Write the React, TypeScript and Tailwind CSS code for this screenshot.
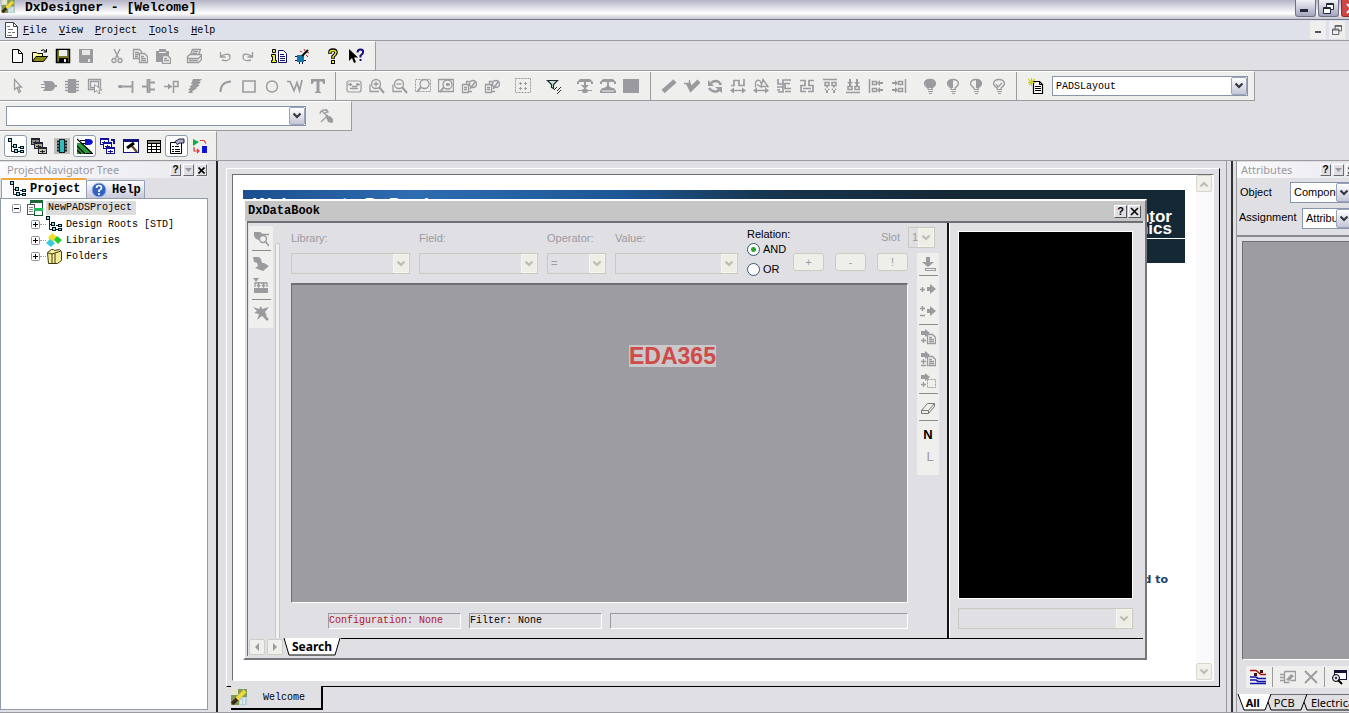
import type { ReactNode } from "react";
import clsx from "clsx";

const G = "#9b9a9f";
const K = "#000";

// line drawing helper, used by most of the flat toolbar glyphs
const line = (d: string, color = G, w = color === G ? 1.3 : 1) => (
  <path d={d} fill="none" stroke={color} strokeWidth={w} />
);
const fill = (d: string, color = G) => <path d={d} fill={color} />;

const bulb = (shade: ReactNode) => (
  <>
    {shade}
    {line("M6 11.5 V10 Q2.500 7.500 2.500 5.500 Q3 1.500 8 1.500 Q13 1.500 13.500 5.500 Q13.500 7.500 10 10 V11.500")}
    {fill("M6 11h5v1H6zM6 13h5v1H6zM7 15h3v1H7z")}
  </>
);

const tree = (
  <>
    {line("M3.5 4V13.5H6M3.5 8.5H7M10 9.500H13M9 13.5H13", "#123")}
    <g fill="#8dd" stroke="#012" strokeWidth="1">
      <rect x=".5" y=".5" width="3" height="3" />
      <rect x="5.500" y="6.500" width="3" height="3" />
      <rect x="6.500" y="11.500" width="3" height="3" />
      <rect x="12.500" y="8.500" width="3" height="2" />
      <rect x="12.500" y="12.500" width="3" height="2" />
    </g>
  </>
);

const sheet = (x: number, y: number, c: string, f = "#fff") => (
  <>
    <rect x={x + 0.5} y={y + 0.5} width="8" height="6" fill={f} stroke={c} />
    <rect x={x} y={y} width="9" height="2" fill={c} />
    <path d={`M${x + 2} ${y + 4.5}h5M${x + 4.5} ${y + 3}v3`} stroke={c} />
  </>
);

const logo = (
  <>
    <rect width="16" height="16" fill="#7f9a5a" />
    <rect x="8" y="8" width="8" height="8" fill="#b7cfd6" />
    <rect width="7" height="6" fill="#e3e6c8" />
    <path d="M1 15 14 2" stroke="#f0d838" strokeWidth="4" />
    <path d="M1 15 6 10" stroke="#3a2c1c" strokeWidth="4" />
    <path d="M10 15v-4M13 15v-6" stroke="#fff" />
  </>
);

const icons: Record<string, ReactNode> = {
  logo,
  tree,
  doc: (
    <>
      <path d="M2.500 .5h8l4 4v11h-12z" fill="#fff" stroke="#444" />
      {line("M10.500 .5v4h4", "#444")}
      {line("M4 4.500h3M5 7.500h5M5 10.500h3M9 10.500h3M4 13.500h5", "#777")}
    </>
  ),
  new: (
    <>
      <path d="M3.500 1.500h6l4 4v9h-10z" fill="#fff" stroke={K} />
      {line("M9.500 1.500v4h4", K)}
    </>
  ),
  open: (
    <>
      <path d="M.5 13.500v-9h4l1 1h5v3" fill="#ffff9c" stroke={K} />
      <path d="M.5 13.500 4 8.500h11.500l-4 5z" fill="#8a8a18" stroke={K} />
      {line("M9 2.500q3-2 5 1M14.500 1v3h-3", K)}
    </>
  ),
  save: (
    <>
      <path d="M1.500 1.500h13v13h-13z" fill="#7b7b22" stroke={K} strokeWidth="1.500" />
      {fill("M4 2h8v6H4z", "#eee")}
      {fill("M4 10h9v5H4z", K)}
      {fill("M9 11h2v3H9z", "#eee")}
    </>
  ),
  saveOff: (
    <>
      {fill("M1 1h14v14H2l-1-1z")}
      {fill("M4 2h8v5H4z", "#e8e8e6")}
      {fill("M10 11h2v3h-2z", "#e8e8e6")}
    </>
  ),
  cut: (
    <>
      {line("M5 1 9.500 10M11 1 6.500 10", G, 1.400)}
      <circle cx="5" cy="12.500" r="2" fill="none" stroke={G} strokeWidth="1.300" />
      <circle cx="11" cy="12.500" r="2" fill="none" stroke={G} strokeWidth="1.300" />
    </>
  ),
  copy: (
    <>
      {line("M1.500 1.500h6l2 2v7h-8zM3 4.500h4M3 6.500h4M3 8.500h3")}
      <path d="M7.500 5.500h5l3 3v6h-8z" fill="#efefed" stroke={G} strokeWidth="1.300" />
      {line("M9 8.500h3M9 10.500h5M9 12.500h5")}
    </>
  ),
  paste: (
    <>
      {fill("M1 3h3V1h7v2h3v11H1z")}
      {fill("M4 4h7v1H4z", "#efefed")}
      <path d="M7.500 7.500h5l3 3v5h-8z" fill="#efefed" stroke={G} strokeWidth="1.300" />
      {line("M9 10.500h3M9 12.500h5")}
    </>
  ),
  print: (
    <>
      {line("M4.500 6.500 6.500 1.500h8l-2 5M7 3.500h5M6 5.500h5")}
      {line("M1.500 8.500 4 6.500h11.500v5l-3 3h-11zM1.500 10.500h11l3-3M3 12.500h9")}
    </>
  ),
  undo: <>{line("M5 12q8 2 8-3t-9-1M3.500 4v5h5")}</>,
  redo: <>{line("M11 12q-8 2-8-3t9-1M12.500 4v5h-5")}</>,
  info: (
    <>
      <path d="M1.500 1.500h3v3h-3zM.5 6.500h4v6h1v2h-5v-2h1v-4h-1z" fill="#ee2" stroke={K} />
      <path d="M7.500 2.500h5l3 3v9h-8z" fill="#fff" stroke="#116" />
      {line("M9 6.500h4M9 8.500h5M9 10.500h5M9 12.500h5", "#116")}
    </>
  ),
  wand: (
    <>
      {fill("M3 7h7v7H3z", "#17a")}
      {line("M1 8.500h2M1 12.500h2M10 12.500h2M5.500 14v2M8.500 14v2", "#115")}
      {line("M8 8 14 2", K, 2)}
      {line("M10 1l1 2M15 5l-2-1M14 9l-2-2M6 3l2 1", "#b22")}
    </>
  ),
  help: (
    <>
      {line("M5 6V4q0-2 3-2t3 2.500q0 1.500-3 4V11", K, 3.500)}
      {line("M5 5.500V4q0-1.500 3-1.500t3 2q0 1.500-3 4v2", "#ee3", 1.400)}
      {fill("M6 12h4v4H6z", K)}
      {fill("M7 13h2v2H7z", "#ee3")}
    </>
  ),
  whats: (
    <>
      {fill("M1 1v12l3-3 2 5 2-1-2-4.500h4z", K)}
      {line("M9.500 4.500q0-3 3-3t2.500 3q0 1.500-2.500 3v2M12.500 11v2", "#117", 2)}
    </>
  ),
  cursor: <>{line("M4.500 1.500v10l2.500-2 2 5 1.500-1-2-4.500h3z")}</>,
  gate: <>{fill("M2 3h7q4 0 5 4h2v2h-2q-1 4-5 4H2l2-3H0V9h4V7H0V6h4z")}</>,
  chip: (
    <>
      {fill("M4 1h8v14H4z")}
      {line("M1 3.500h14M1 6.500h14M1 9.500h14M1 12.500h14", G, 1.500)}
    </>
  ),
  boxsel: (
    <>
      {line("M1.500 1.500h12v10h-12zM3.500 3.500h8v6h-8z")}
      <path d="M7.500 6.500v8l2-2 2 3h1.500l-1-3.500h3z" fill="#efefed" stroke={G} />
    </>
  ),
  pin: <>{line("M0 8.500h14M14.500 3v12", G, 1.800)}{fill("M1 7h3v3H1z")}</>,
  bus: <>{line("M6.500 1v14M8.500 1v14M1 8.500h6M9 4.500h5M9 11.500h5", G, 1.800)}</>,
  port: (
    <>
      {line("M0 8.500h8M9.500 15V3.500h4.500v5h-4.500", G, 1.500)}
      {fill("M4 5.500l4 3-4 3z")}
    </>
  ),
  ripper: <>{fill("M6 1h9l-3 3h2l-3 3h2l-4 3h1l-4 3H5l1 2H1l2-3H1l3-3H2l4-3H4z")}</>,
  arc: <>{line("M2.500 14Q2.500 4 13 3.500", G, 2)}</>,
  rect: <>{line("M2 3h12v11H2z", G, 1.600)}</>,
  circle: <circle cx="8" cy="8.500" r="5.500" fill="none" stroke={G} strokeWidth="1.400" />,
  poly: <>{line("M0 3.500h3l4 9 3-8 2.500 8L15 2", G, 1.700)}</>,
  text: <>{fill("M1 1h14v5h-1.500L12 3.500H9.500v10l1.500.5V15H5v-1l1.500-.5v-10H4L2.500 6H1z")}</>,
  fitpage: (
    <>
      <rect x="1" y="3" width="14" height="11" rx="2" fill="none" stroke={G} strokeWidth="1.200" />
      {line("M2 6.500h4M10 6.500h4M6 8.500h5M4 10.500h8M4.500 5v3M11.500 5v3")}
    </>
  ),
  zoomIn: (
    <>
      {line("M1 6.500V13.500h9")}
      <circle cx="7" cy="6" r="4.500" fill="none" stroke={G} strokeWidth="1.300" />
      {line("M7 3.500v5M4.500 6h5")}
      {line("M10 9l5 6", G, 2)}
    </>
  ),
  zoomOut: (
    <>
      {line("M1 6.500V13.500h9")}
      <circle cx="7" cy="6" r="4.500" fill="none" stroke={G} strokeWidth="1.300" />
      {line("M4.500 6h5")}
      {line("M10 9l5 6", G, 2)}
    </>
  ),
  zoomSel: (
    <>
      <path d="M.5 1.500h15v12H.5z" fill="none" stroke={G} strokeDasharray="2 1" />
      <circle cx="9.500" cy="6" r="4.500" fill="#efefed" stroke={G} strokeWidth="1.300" />
      {line("M6 9l-4 5", G, 2)}
    </>
  ),
  zoomFit: (
    <>
      {line("M.5 1.500h15v12H.5z")}
      <circle cx="9.500" cy="6.500" r="4.500" fill="#efefed" stroke={G} strokeWidth="1.300" />
      {line("M6 9l-4 5M8 6.500h4M9.500 5v3", G, 2)}
    </>
  ),
  push: (
    <>
      {line("M1.500 6.500h6v8h-6zM3 9.500h3M3 11.500h3M8 13.500h3M5.500 6V3.500h3")}
      <circle cx="12" cy="6" r="3.500" fill="none" stroke={G} strokeWidth="1.500" />
      {line("M9 11l5-7", G, 1.500)}
    </>
  ),
  grid: (
    <>
      <path d="M.5 .5h15v14H.5z" fill="none" stroke={G} strokeDasharray="2 1" />
      {line("M4 5.500h3M9 5.500h3M4 10.500h3M9 10.500h3M5.500 4v3M10.500 4v3M5.500 9v3M10.500 9v3", G, 1)}
    </>
  ),
  filter: (
    <>
      <path d="M1.500 2.500h10l-4 4v4l-2-1v-3z" fill="#cfe3df" stroke="#1b2b2b" strokeWidth="1.200" />
      {line("M8 12l3-3M11 13l4-4M11 16l4-4", "#1b2b2b")}
    </>
  ),
  hier1: (
    <>
      {fill("M3 1h10l3 3v2h-2V4H2v2H0V4zM4 7h8l-3 3h-2zM1 12h4l1-1h4l1 1h4v1h-4l-1 2H6l-1-2H1zM7 4h2v7H7z")}
    </>
  ),
  hier2: (
    <>
      {fill("M3 1h10l3 3v2h-2V4H2v2H0V4zM7 4h2v4l3 2h2l2 3v2H0v-2l2-3h2l3-2z")}
      {line("M2 13h12", "#efefed", 1)}
    </>
  ),
  block: <rect x="0" y="1" width="16" height="14" fill={G} />,
  pen: <>{line("M2 13.500 14 3", G, 4.500)}</>,
  penCheck: <>{line("M4 5l3 6L15 3", G, 4.500)}{line("M0 5.500h6M5.500 2v5", G)}</>,
  rotate: (
    <>
      {line("M4 5q2-2 5-2t5 4M12 12q-2 2-5 1.500t-5-3.500", G, 2.500)}
      {fill("M1 2v6h6zM15 15V9H8z")}
    </>
  ),
  route: (
    <>
      {line("M1 7.500h3V2.500h5v5h5V1", G, 1.700)}
      {line("M3 12.500h10", G)}
      {fill("M0 12.500l4-3v6zM16 12.500l-4-3v6z")}
    </>
  ),
  cloud: (
    <>
      {line("M2.500 9.500V4.500q2-4 5-1l1 3M10 1.500l5 7h-7zM3 12.500h10M4 6.500l5 3")}
      {fill("M0 12.500l4-3v6zM16 12.500l-4-3v6z")}
    </>
  ),
  align1: <>{line("M2 1v5h5V2h8M14 5.500H9v5h6M1 9h6v5H2M9 13.500h6M1 12h3M7 2v12", G, 1.700)}</>,
  align2: <>{line("M1 2.500h5v5H2v6h5M15 2.500h-5v5h4v6H9M4 10.500h8", G, 1.700)}</>,
  alTop: (
    <>
      {line("M1 1.500h14M3 4.500h4v3h-4zM10 4.500h4v3h-4z", G, 1.500)}
      {fill("M4 8h2v7H4zM2 12h6l-3-3zM11 8h2v7h-2zM9 12h6l-3-3z")}
    </>
  ),
  alBottom: (
    <>
      {line("M1 14.500h14M3 8.500h4v3h-4zM10 8.500h4v3h-4z", G, 1.500)}
      {fill("M4 1h2v7H4zM2 4h6L5 7zM11 1h2v7h-2zM9 4h6l-3 3z")}
    </>
  ),
  alLeft: (
    <>
      {line("M1.500 1v14M4.500 3.500h4v3h-4zM4.500 10.500h4v3h-4z", G, 1.500)}
      {fill("M9 5l3-3v2h3v2h-3v2zM9 12l3-3v2h3v2h-3v2z")}
    </>
  ),
  alRight: (
    <>
      {line("M14.500 1v14M7.500 3.500h4v3h-4zM7.500 10.500h4v3h-4z", G, 1.500)}
      {fill("M7 5L4 2v2H1v2h3v2zM7 12l-3-3v2H1v2h3v2z")}
    </>
  ),
  bulb1: bulb(fill("M3 5q1-4 5-4t5.500 4q0 2-3.500 5H6Q3 7 3 5")),
  bulb2: bulb(fill("M3 5q1-4 5-4v9H6Q3 7 3 5")),
  bulb3: bulb(fill("M8 1q5 0 5.500 4 0 2-3.500 5H8z")),
  bulb4: bulb(line("M5 6l2 3 4-4")),
  report: (
    <>
      <path d="M5.500 3.500h6l3 3v9h-9z" fill="#fff" stroke={K} strokeWidth="1.200" />
      {line("M11.500 3.500v3h3M7 8.500h6M7 10.500h6M7 12.500h6", K)}
      {line("M0 1l3 3M3.500 0v8M0 4.500h8M7 1L1 7", "#cc2", 1.200)}
    </>
  ),
  rename: (
    <>
      {line("M2 6q0-4 5-4l3 2M8 1l2 3-3 1M4 3l11 11")}
      {fill("M8 9l4-1 3 3-1 4-4-1z")}
      {line("M3 14l7-7")}
    </>
  ),
  sheets: (
    <>
      {sheet(0, 0, "#223", "#888")}
      {sheet(3, 4, "#223", "#aa8")}
      {sheet(7, 9, "#223", "#cc9")}
    </>
  ),
  device: (
    <>
      <rect width="16" height="16" fill="#bdbdbd" />
      <rect x="5.500" y="1.500" width="5" height="13" fill="#3bb" stroke="#122" />
      {line("M3 3.500h2M3 6.500h2M3 9.500h2M3 12.500h2M11 3.500h2M11 6.500h2M11 9.500h2M11 12.500h2", "#122", 2)}
    </>
  ),
  databook: (
    <>
      {fill("M0 5h5l11 11H0z", "#2a9a3a")}
      {line("M0 8l8 8M0 12l4 4M0 1l15 14", K, 1.200)}
      {fill("M8 1h4q3 0 4 3-1 3-4 3H8z", "#11c")}
      {line("M3 2.500h5M5 5.500h3M9 15.500h7", K)}
    </>
  ),
  windows: (
    <>
      {sheet(0, 0, "#119")}
      {sheet(3, 4, "#119")}
      {sheet(6, 9, "#119")}
      {fill("M11 1h4v5h-2V3h-2z", "#119")}
    </>
  ),
  hammer: (
    <>
      <rect x=".5" y="1.500" width="15" height="13" fill="#fff" stroke="#117" />
      {fill("M0 1h16v3H0z", "#117")}
      {line("M8 7l6 7", "#641", 2.200)}
      {line("M4 10l7-5", K, 3)}
    </>
  ),
  table: (
    <>
      <rect x="1.500" y="2.500" width="13" height="12" fill="#fff" stroke={K} />
      {line("M1 4h14M1 8.500h14M1 11.500h14M5.500 6v8M10.500 6v8", K)}
      {line("M1 5.500h14", K)}
    </>
  ),
  props: (
    <>
      <path d="M1.500 4.500h11v11h-11z" fill="#fff" stroke={K} />
      {line("M3 8.500h2M6 8.500h4M3 11.500h2M6 11.500h5M3 13.500h2M6 13.500h5", K)}
      <path d="M6 3.500l4-2.500h5v4h-4l-3 1.500z" fill="#aac" stroke="#223" />
    </>
  ),
  sync: (
    <>
      {fill("M1 1l6 3-6 4z", "#1a4")}
      {fill("M10 8h5v7h-5z", "#11d")}
      {line("M8 2.500h4l2 3M2 9v4h5M5 11l2 2-2 2", "#d33", 1.200)}
    </>
  ),
  project: (
    <>
      <rect x="3.500" y=".5" width="12" height="8" fill="#fff" stroke="#153" />
      {fill("M3 0h13v3H3z", "#1a6b35")}
      <rect x=".5" y="4.500" width="7" height="10" fill="#fff" stroke="#555" />
      {line("M2 7.500h4M2 9.500h4M2 11.500h4", "#888")}
      <rect x="7.500" y="8.500" width="8" height="7" fill="#fff" stroke="#153" />
      {fill("M7 8h9v3H7z", "#2b5")}
    </>
  ),
  libs: (
    <>
      {fill("M6 1l5 4-4 5-5-4z", "#f0e020")}
      {fill("M11 4l5 4-4 4-4-4z", "#2c3")}
      {fill("M4 7l5 4-4 4-5-4z", "#3cd")}
    </>
  ),
  folders: (
    <>
      <path d="M1.500 4.500l4-3h2l1 1 5-1 2 2v9l-4 3h-9z" fill="#f5ef9a" stroke="#443a10" />
      {line("M2 5l4 1v9M6 6l6-2 3-1M9 5v10", "#443a10")}
    </>
  ),
  dbFind: (
    <>
      {fill("M1 1h6l3 2v3H8l-2 3-3-1-2-3z")}
      <circle cx="10" cy="8" r="3.500" fill="#efefed" stroke={G} strokeWidth="1.400" />
      {line("M12 10l4 5M10 3.500h6", G, 1.600)}
    </>
  ),
  dbAdd: <>{fill("M0 1h6l2 2 1 4h2l5 3-6 5-8-3 3-2-1-3-3-1z")}</>,
  dbLoad: (
    <>
      {fill("M1 10h14v5H1zM0 0h6L3 4z")}
      {line("M2 9V5h12v4M5.500 4v5M10.500 4v5M4 7l1.500 2L7 7M9 7l1.500 2L12 7")}
    </>
  ),
  dbOff: (
    <>
      {fill("M0 2l6 2 2-3 1 3 7-2-4 5 2 4-4-1-6 5 2-6-5-1 3-2z")}
      {line("M8 8l7 7", G, 2.500)}
    </>
  ),
  place: <>{fill("M6 1h4v5h4l-6 5-6-5h4zM5 12h11v3H5z")}{line("M6 13.500h9", "#efefed")}</>,
  placeOne: <>{fill("M7 6h3V3l6 5-6 5v-3H7z")}{line("M0 8.500h5M2.500 6v5", G, 1.500)}</>,
  placeMany: <>{fill("M7 6h3V3l6 5-6 5v-3H7z")}{line("M0 5.500h5M2.500 3v5M0 12.500h5", G, 1.500)}</>,
  annot: (
    <>
      {fill("M1 2h4V0l5 4-5 4V6H1z")}
      <path d="M7.500 5.500h5l3 3v6h-8z" fill="#efefed" stroke={G} strokeWidth="1.300" />
      {line("M9 8.500h3M9 10.500h5M9 12.500h5M1 11.500h5M3.500 9v5")}
    </>
  ),
  annotMany: (
    <>
      {fill("M1 2h4V0l5 4-5 4V6H1z")}
      <path d="M7.500 5.500h5l3 3v6h-8z" fill="#efefed" stroke={G} strokeWidth="1.300" />
      {line("M9 8.500h3M9 10.500h5M9 12.500h5M1 10.500h5M3.500 8v5M1 14.500h5")}
    </>
  ),
  annotSel: (
    <>
      {fill("M1 2h4V0l5 4-5 4V6H1z")}
      <path d="M7.500 6.500h8v8h-8z" fill="none" stroke={G} strokeDasharray="2 1" />
      {line("M1 11.500h5M3.500 9v5")}
    </>
  ),
  eraser: (
    <>
      {line("M1.500 11.500l6-7h7v3l-6 7h-7z", "#777")}
      {line("M1.500 11.500h7l6-7M8.500 11.500v3", "#777")}
    </>
  ),
  nets: (
    <>
      {line("M0 1.500h6l5 4h5", "#a11", 1.500)}
      {fill("M4 4h3v3H4zM10 1h3v3h-3z", "#411")}
      {line("M0 8h6l2 1.500h8M0 11h6l2 1.500h8M0 14.500h16", "#11a", 1.600)}
    </>
  ),
  editOff: (
    <>
      {line("M4.500 2.500h11v9h-5M4.500 2.500v11h5M0 5.500h4M0 8.500h4M0 11.500h4")}
      {fill("M6 11l5-6 3 2-5 5z")}
    </>
  ),
  deleteOff: <>{line("M2 2l12 12M14 2L2 14", G, 1.800)}</>,
  inspect: (
    <>
      <rect x="3.500" y="1.500" width="12" height="9" fill="#fff" stroke="#113" />
      {fill("M3 1h13v3H3z", "#113")}
      <circle cx="5" cy="9" r="3.500" fill="#dde" stroke={K} />
      {line("M7 11l4 4", K, 2)}
      <circle cx="5" cy="9" r="1" />
    </>
  ),
  helpBall: (
    <>
      <circle cx="8" cy="8" r="7" fill="#2f62c4" stroke="#9fb6e6" />
      {line("M5.500 6q0-2.500 2.500-2.500T10.500 6q0 1-2.500 2.500V10M8 11v2", "#fff", 1.700)}
    </>
  ),
};

function Icon({ name, className = "w-4 h-4" }: { name: string; className?: string }) {
  return (
    <svg viewBox="0 0 16 16" className={clsx("block shrink-0", className)} aria-hidden="true">
      {icons[name]}
    </svg>
  );
}

function Chevron({ className }: { className?: string }) {
  return (
    <svg viewBox="0 0 10 8" className={clsx("w-[10px] h-2", className)} aria-hidden="true">
      <path d="M1.500 1.500 5 5 8.500 1.500" fill="none" stroke="currentColor" strokeWidth="2.200" />
    </svg>
  );
}

function Tool({ name, pressed }: { name: string; pressed?: boolean }) {
  return (
    <button
      aria-label={name}
      className={clsx(
        "w-[23px] h-[22px] flex items-center justify-center shrink-0",
        pressed && "bg-white border border-[#8e9bab] rounded-[3px]"
      )}
    >
      <Icon name={name} />
    </button>
  );
}

function ToolGroups({ groups }: { groups: string[][] }) {
  return (
    <div className="flex gap-2">
      {groups.map((group, i) => (
        <div key={i} className="flex">
          {group.map((name, j) => (
            <Tool key={j} name={name} />
          ))}
        </div>
      ))}
    </div>
  );
}

interface ComboProps {
  label: string;
  id: string;
  value?: string;
  off?: boolean;
  className?: string;
}

function Combo({ label, id, value = "", off, className }: ComboProps) {
  return (
    <div className={clsx("relative shrink-0", className)}>
      <select
        id={id}
        aria-label={label}
        disabled={off}
        className={clsx(
          "block w-full h-full appearance-none border pl-[3px] pr-4 opacity-100",
          off ? "border-[#cac9bd] bg-[#e0dfe4] text-[#9b9a9f]" : "border-[#8796ad] bg-white text-black"
        )}
      >
        <option>{value}</option>
      </select>
      <span
        className={clsx(
          "absolute top-px right-px bottom-px w-4 flex items-center justify-center border pointer-events-none",
          off
            ? "bg-[#efeee6] border-[#f6f5ef] text-[#bdbcb2]"
            : "bg-linear-to-b from-white to-[#c3c6d6] border-[#9aa3b8] rounded-[2px] text-[#34373f]"
        )}
      >
        <Chevron />
      </span>
    </div>
  );
}

function PanelButtons() {
  const box =
    "w-[11px] h-3 flex items-center justify-center bg-[#e0dfe4] border border-white border-r-[#6b6a6e] border-b-[#6b6a6e] text-[10px] leading-none font-bold";
  return (
    <div className="flex gap-[2px]">
      <button className={box}>?</button>
      <button className={clsx(box, "text-[#9b9a9f]")} aria-label="Pin">
        <svg viewBox="0 0 7 4" className="w-[7px] h-1">
          <path d="M0 0h7L3.500 4z" fill="currentColor" />
        </svg>
      </button>
      <button className={box} aria-label="Close">
        <svg viewBox="0 0 7 7" className="w-[7px] h-[7px]">
          <path d="M.5.5l6 6M6.500.5l-6 6" stroke="#000" strokeWidth="1.600" />
        </svg>
      </button>
    </div>
  );
}

function TitleBar() {
  const win =
    "w-[21px] h-[17px] shrink-0 rounded-b-[3px] border border-t-0 border-[#6f7087] bg-linear-to-b from-[#f1f1f6] to-[#a3a5bd] flex items-center justify-center";
  return (
    <header className="h-5 flex items-start bg-linear-to-b from-[#b5b4c6] via-white via-70% to-[#c5c5d1] border-b border-[#77768f] overflow-hidden">
      <Icon name="logo" className="w-4 h-[13px]" />
      <h1 className="pl-[9px] font-['Liberation_Mono'] font-bold text-[13px] leading-4 flex-1">
        DxDesigner - [Welcome]
      </h1>
      <div className="flex gap-[2px] w-[54px] overflow-hidden">
        <button className={win} aria-label="Minimize">
          <span className="w-2 h-[3px] bg-[#222638] mt-1 -ml-1" />
        </button>
        <button className={win} aria-label="Restore">
          <svg viewBox="0 0 11 11" className="w-[11px] h-[11px]" fill="#fff" stroke="#222638">
            <path d="M3.500 .5h7v6h-7zM3 1.500h8" />
            <path d="M.5 4.500h7v6h-7zM0 5.500h8" />
          </svg>
        </button>
        <button
          className="w-[21px] h-[17px] shrink-0 rounded-b-[3px] border border-t-0 border-[#8f2a2a] bg-[#cf4444] flex items-center pl-1"
          aria-label="Close"
        >
          <svg viewBox="0 0 11 11" className="w-[11px] h-[11px]">
            <path d="M1 1l9 9M10 1L1 10" stroke="#fff" strokeWidth="2" />
          </svg>
        </button>
      </div>
    </header>
  );
}

function MenuBar() {
  return (
    <nav className="h-[21px] flex items-center bg-[#dfe1ea] border-b border-[#9b9a9f]">
      <Icon name="doc" className="w-4 h-4 ml-[3px]" />
      <div className="flex gap-3 pl-1 flex-1 font-['Liberation_Mono'] text-[10px]">
        {["File", "View", "Project", "Tools", "Help"].map((item) => (
          <button key={item}>
            <span className="underline">{item[0]}</span>
            {item.slice(1)}
          </button>
        ))}
      </div>
      <div className="flex gap-[3px] pr-1 text-[#55565e]">
        <button className="w-4 h-[18px] bg-[#efefed] flex items-center justify-center" aria-label="Minimize document">
          <span className="w-[6px] h-[2px] bg-current mt-1" />
        </button>
        <button className="w-4 h-[18px] bg-[#efefed] flex items-center justify-center" aria-label="Restore document">
          <svg viewBox="0 0 11 11" className="w-[10px] h-[10px]" fill="#efefed" stroke="currentColor">
            <path d="M3.500 .5h7v6h-7zM3 1.500h8" />
            <path d="M.5 4.500h7v6h-7zM0 5.500h8" />
          </svg>
        </button>
      </div>
    </nav>
  );
}

const bar = "flex items-center w-max bg-[#efefed] border-t border-t-white border-r border-r-[#9b9a9f]";
const rule = "border-b border-[#9b9a9f]";

function Toolbars() {
  return (
    <div className="text-[10px]">
      <div className={rule}>
        <div className={clsx(bar, "h-[29px] pl-[5px] pr-2 pb-px")}>
          <ToolGroups
            groups={[
              ["new", "open", "save", "saveOff"],
              ["cut", "copy", "paste"],
              ["print"],
              ["undo", "redo"],
              ["info", "wand"],
              ["help", "whats"],
            ]}
          />
        </div>
      </div>
      <div className={clsx(bar, rule, "h-[30px]")}>
        <div className="pl-[6px] pr-[6px] h-full flex items-center border-r border-[#9b9a9f]">
          <ToolGroups
            groups={[
              ["cursor"],
              ["gate", "chip", "boxsel"],
              ["pin", "bus", "port", "ripper"],
              ["arc", "rect", "circle", "poly", "text"],
            ]}
          />
        </div>
        <div className="pl-[6px] pr-2 h-full flex items-center border-r border-[#9b9a9f]">
          <ToolGroups
            groups={[
              ["fitpage", "zoomIn", "zoomOut", "zoomSel", "zoomFit", "push", "push"],
              ["grid"],
              ["filter"],
              ["hier1", "hier2", "block"],
            ]}
          />
        </div>
        <div className="pl-[6px] pr-[6px] h-full flex items-center border-r border-[#9b9a9f]">
          <ToolGroups
            groups={[
              ["pen", "penCheck", "rotate", "route", "cloud", "align1", "align2", "alTop", "alBottom", "alLeft", "alRight"],
              ["bulb1", "bulb2", "bulb3", "bulb4"],
            ]}
          />
        </div>
        <div className="pl-[7px] pr-[6px] h-full flex items-center gap-[5px]">
          <Tool name="report" />
          <Combo
            label="Flow"
            id="flow"
            value="PADSLayout"
            className="w-[196px] h-5 font-['Liberation_Mono']"
          />
        </div>
      </div>
      <div className={clsx(bar, rule, "h-[30px] pl-[6px] pr-[14px] gap-2")}>
        <Combo label="Command" id="command" className="w-[300px] h-5" />
        <Tool name="rename" />
      </div>
      <div className={clsx(bar, "h-[29px] pl-1 pr-[5px]")}>
        <Tool name="tree" pressed />
        <Tool name="sheets" />
        <Tool name="device" />
        <Tool name="databook" pressed />
        <Tool name="windows" />
        <Tool name="hammer" />
        <Tool name="table" />
        <Tool name="props" pressed />
        <Tool name="sync" />
      </div>
    </div>
  );
}

function TreeBox({ open }: { open?: boolean }) {
  return (
    <svg viewBox="0 0 9 9" className="w-[9px] h-[9px] shrink-0">
      <rect x=".5" y=".5" width="8" height="8" rx="1" fill="#fff" stroke="#8b93a3" />
      <path d={open ? "M2 4.500h5" : "M2 4.500h5M4.500 2v5"} stroke="#000" />
    </svg>
  );
}

function Navigator() {
  const items = [
    { icon: "tree", label: "Design Roots [STD]" },
    { icon: "libs", label: "Libraries" },
    { icon: "folders", label: "Folders" },
  ];
  return (
    <aside className="w-[208px] shrink-0 flex flex-col pb-[2px]">
      <div className="h-4 flex items-center justify-between pl-[7px] pr-[1px] mt-px bg-linear-to-r from-[#fbfbfd] to-[#e8e8ee]">
        <span className="font-['Noto_Sans'] text-[11px] leading-4 text-[#9b9a9f]">ProjectNavigator Tree</span>
        <PanelButtons />
      </div>
      <div className="h-5 flex items-end pl-px font-['Liberation_Mono'] font-bold text-[12px] leading-4">
        <button className="h-5 w-[86px] flex items-center gap-1 pl-2 bg-[#fbfbfc] border border-b-0 border-[#91a0b8] border-t-2 border-t-[#f0a83a] rounded-t-[2px]">
          <Icon name="tree" />
          Project
        </button>
        <button className="h-[18px] w-[58px] flex items-center gap-[5px] pl-1 bg-linear-to-b from-[#fdfdfe] to-[#c9cadb] border border-b-0 border-l-0 border-[#91a0b8] rounded-t-[2px]">
          <Icon name="helpBall" />
          Help
        </button>
      </div>
      <div className="flex-1 bg-white border border-[#919bab] pt-px font-['Liberation_Mono'] text-[10px]">
        <div className="flex items-center h-4 pl-[11px] gap-[6px]">
          <TreeBox open />
          <div className="flex items-center gap-[3px]">
            <Icon name="project" />
            <span className="bg-[#dcdcdc] px-[2px] pr-1 leading-[14px]">NewPADSProject</span>
          </div>
        </div>
        {items.map((item) => (
          <div key={item.label} className="flex items-center h-4 pl-[30px]">
            <TreeBox />
            <span className="w-[6px] border-t border-dotted border-[#9b9a9f]" />
            <Icon name={item.icon} />
            <span className="pl-1">{item.label}</span>
          </div>
        ))}
      </div>
    </aside>
  );
}

function SearchForm() {
  const fields = [
    { id: "library", label: "Library:", w: "w-[119px]" },
    { id: "field", label: "Field:", w: "w-[119px]" },
    { id: "operator", label: "Operator:", w: "w-[59px]", value: "=" },
    { id: "value", label: "Value:", w: "w-[123px]" },
  ];
  return (
    <div className="h-[60px] flex justify-between text-[#9b9a9f]">
      <div className="flex gap-[9px]">
        {fields.map((f) => (
          <div key={f.id} className="flex flex-col pt-2 gap-2">
            <label htmlFor={f.id} className="leading-[14px]">
              {f.label}
            </label>
            <Combo label={f.label} id={f.id} value={f.value} off className={clsx(f.w, "h-[21px]")} />
          </div>
        ))}
        <fieldset className="text-black pt-1">
          <legend className="contents">
            <span className="block leading-[14px]">Relation:</span>
          </legend>
          {["AND", "OR"].map((rel) => (
            <label key={rel} className="flex items-center gap-[3px] h-4 mb-1">
              <input
                type="radio"
                name="relation"
                defaultChecked={rel === "AND"}
                className="appearance-none w-[13px] h-[13px] rounded-full border border-[#33566f] bg-white checked:bg-[radial-gradient(circle,#2ba52b_0_2px,#fff_3px)]"
              />
              {rel}
            </label>
          ))}
        </fieldset>
      </div>
      <div className="flex flex-col items-end pt-[7px] gap-2">
        <label htmlFor="slot" className="leading-[14px] pr-2">
          Slot
        </label>
        <div className="flex gap-[11px]">
          {["+", "-", "!"].map((c) => (
            <button
              key={c}
              className="w-[31px] h-[18px] mt-px rounded-[3px] border border-[#cccbc2] bg-[#efefea] text-[11px] leading-none"
            >
              {c}
            </button>
          ))}
        </div>
      </div>
    </div>
  );
}

function Rule() {
  return <div className="w-[19px] h-px bg-[#8b8a8e]" />;
}

function DataBookDialog() {
  const titleBtn =
    "w-[13px] h-[13px] flex items-center justify-center bg-[#e0dfe4] border border-white border-r-[#55555a] border-b-[#55555a] font-bold text-[11px] leading-none";
  const cell = "h-[16px] border border-[#9b9a9f] border-r-white border-b-white leading-[14px]";
  return (
    <section className="absolute left-[10px] top-6 right-[66px] bottom-5 flex flex-col bg-[#e0dfe4] border-2 border-white border-r-[#77767a] border-b-[#77767a] text-[11px]">
      <div className="h-5 shrink-0 flex items-center justify-between pl-[3px] pr-1 bg-[#c6c6c6]">
        <h2 className="font-['Liberation_Mono'] font-bold text-[12px] leading-4">DxDataBook</h2>
        <div className="flex gap-px">
          <button className={titleBtn}>?</button>
          <button className={titleBtn} aria-label="Close DxDataBook">
            <svg viewBox="0 0 9 9" className="w-[9px] h-[9px]">
              <path d="M1 1l7 7M8 1L1 8" stroke="#000" strokeWidth="1.600" />
            </svg>
          </button>
        </div>
      </div>
      <div className="flex-1 min-h-0 flex flex-col mx-[2px] mb-[2px] border-t-2 border-l border-[#6f6e72]">
        <div className="flex-1 min-h-0 flex">
          <div className="w-6 self-start mt-[3px] ml-px py-[2px] flex flex-col items-center bg-[#efefed]">
            <Tool name="dbFind" />
            <Rule />
            <div className="flex flex-col py-[2px]">
              <Tool name="dbAdd" />
              <Tool name="dbLoad" />
            </div>
            <Rule />
            <div className="py-[2px]">
              <Tool name="dbOff" />
            </div>
          </div>
          <div className="w-[5px] mt-5 ml-[2px] rounded-t-[2px] border border-[#c9c8c0] border-b-0 bg-[#f1f1ee]" />
          <div className="flex-1 min-w-0 flex flex-col ml-[11px]">
            <SearchForm />
            <div className="relative flex-1 bg-[#9d9ca0] border border-[#6f6e72] border-t-2 border-r-white border-b-white">
              <span className="absolute left-[337px] top-[60px] bg-[#c9c8cb] text-[#cf4a48] font-bold text-[23px] leading-[22px]">
                EDA365
              </span>
            </div>
            <div className="flex gap-2 pl-[37px] pt-[10px] pb-[9px] font-['Liberation_Mono'] text-[10px]">
              <div className={clsx(cell, "w-[133px] text-[#b0161e]")}>Configuration: None</div>
              <div className={clsx(cell, "w-[133px]")}>Filter: None</div>
              <div className={clsx(cell, "flex-1")} />
            </div>
          </div>
          <div className="w-[39px] shrink-0 flex flex-col pt-1">
            <Combo label="Slot" id="slot" value="1" off className="w-[27px] h-[21px]" />
            <div className="w-[22px] ml-[9px] mt-[5px] pb-1 flex flex-col items-center bg-[#efefed]">
              <Tool name="place" />
              <Rule />
              <div className="flex flex-col py-[2px]">
                <Tool name="placeOne" />
                <Tool name="placeMany" />
              </div>
              <Rule />
              <div className="flex flex-col py-px">
                <Tool name="annot" />
                <Tool name="annotMany" />
                <Tool name="annotSel" />
              </div>
              <Rule />
              <div className="py-[2px]">
                <Tool name="eraser" />
              </div>
              <Rule />
              <button className="h-7 w-full font-bold text-[13px]">N</button>
              <button className="h-4 w-full text-[13px] leading-4 pl-1 text-[#9b9a9f]">L</button>
              <div className="h-[6px]" />
            </div>
          </div>
          <div className="w-[2px] bg-[#111]" />
          <div className="w-[194px] shrink-0 flex flex-col gap-[9px] pt-2 pl-2 pr-[10px] pb-[9px] border-l border-white">
            <div className="flex-1 bg-black border border-white" />
            <Combo label="Symbol" id="symbol" off className="h-[21px]" />
          </div>
        </div>
        <div className="h-[18px] shrink-0 flex">
          <div className="flex items-center gap-[2px] pl-px text-[#9b9a9f]">
            {["M7 1 3 5l4 4z", "M3 1l4 4-4 4z"].map((d) => (
              <button
                key={d}
                aria-label="Scroll tabs"
                className="w-4 h-4 flex items-center justify-center rounded-[2px] border border-[#cfcec6] bg-[#efefec]"
              >
                <svg viewBox="0 0 10 10" className="w-[10px] h-[10px]">
                  <path d={d} fill="currentColor" />
                </svg>
              </button>
            ))}
          </div>
          <button className="relative w-[58px] h-[18px] font-['Noto_Sans'] font-bold text-[12px] leading-4">
            <svg viewBox="0 0 58 18" className="absolute inset-0 w-full h-full">
              <path d="M1 0h56l-5 17H6z" fill="#fff" />
              <path d="M1 0l5 17h46l5-17" fill="none" stroke="#000" />
            </svg>
            <span className="relative">Search</span>
          </button>
          <div className="flex-1 border-t border-black" />
        </div>
      </div>
    </section>
  );
}

function ScrollArrow({ up }: { up?: boolean }) {
  return (
    <button
      aria-label={up ? "Scroll up" : "Scroll down"}
      className="w-4 h-[17px] flex items-center justify-center rounded-[2px] border border-[#d8d7cc] bg-[#f1f0ea] text-[#bdbcb2]"
    >
      <Chevron className={up ? "rotate-180" : ""} />
    </button>
  );
}

function Workspace() {
  return (
    <main className="flex-1 min-w-0 flex flex-col pl-2 pt-[7px] pr-[6px] border-r border-[#9b9a9f]">
      <div className="flex-1 min-h-0 flex flex-col p-[5px] border border-white border-r-black border-b-black">
        <div className="relative flex-1 flex bg-white border border-[#6f6e72] border-r-white border-b-white">
          <div className="flex-1 min-w-0 flex flex-col pt-[15px] pl-[10px] pr-[11px]">
            <div className="h-[73px] shrink-0 flex flex-col bg-[linear-gradient(90deg,#1b4f8f,#2f6cb0_18%,#1d5796_40%,#173650_55%,#142836_75%)] text-white font-bold">
              <div className="flex justify-between h-12">
                <span className="pl-[10px] pt-1 text-[19px] leading-[22px]">Welcome to DxDesigner</span>
                <span className="pr-[13px] pt-[21px] flex flex-col items-end text-[17px] leading-3">
                  <span>Mentor</span>
                  <span>Graphics</span>
                </span>
              </div>
              <div className="h-px bg-white" />
            </div>
            <p className="mt-auto mb-[92px] pr-[17px] text-right font-['DejaVu_Sans'] font-bold text-[11px] leading-4 text-[#1a3e6e]">
              d to
            </p>
          </div>
          <div className="w-[17px] shrink-0 flex flex-col justify-between bg-[#fafafc]">
            <ScrollArrow up />
            <ScrollArrow />
          </div>
          <DataBookDialog />
        </div>
      </div>
      <div className="h-[25px] shrink-0">
        <button className="relative -mt-px ml-[5px] w-[92px] h-6 flex items-center bg-[#e0dfe4] border-r-2 border-b-2 border-black font-['Liberation_Mono'] text-[10px]">
          <Icon name="logo" />
          <span className="pl-4">Welcome</span>
        </button>
      </div>
    </main>
  );
}

function Attributes() {
  return (
    <aside className="w-[118px] shrink-0 overflow-hidden border-l-2 border-[#333] pl-[3px] text-[11px]">
      <div className="w-[121px] h-full flex flex-col border-l border-[#9b9a9f]">
        <div className="h-4 mt-px flex items-center justify-between pl-1 bg-linear-to-r from-[#fbfbfd] to-[#e8e8ee]">
          <span className="font-['Noto_Sans'] text-[11px] leading-4 text-[#9b9a9f]">Attributes</span>
          <PanelButtons />
        </div>
        <div className="flex justify-between pl-[3px] pr-1 pt-1">
          <label htmlFor="object" className="leading-5">
            Object
          </label>
          <Combo label="Object" id="object" value="Component" className="w-[63px] h-[21px]" />
        </div>
        <div className="flex justify-between pl-[2px] pr-1 pt-[5px] pb-[6px]">
          <label htmlFor="assignment" className="leading-[18px]">
            Assignment
          </label>
          <Combo label="Assignment" id="assignment" value="Attributes" className="w-[51px] h-[21px]" />
        </div>
        <div className="flex-1 flex border-t-2 border-[#8b8a8e] pt-1 pl-[5px]">
          <div className="flex-1 bg-[#9d9ca0] border-l border-t border-[#6f6e72] border-b border-b-white" />
        </div>
        <div className="h-[34px] pl-[9px] py-[6px]">
          <div className="flex items-center bg-[#efefed]">
            <Tool name="nets" />
            <span className="w-px h-5 bg-[#9b9a9f] mx-[3px]" />
            <Tool name="editOff" />
            <Tool name="deleteOff" />
            <span className="w-px h-5 bg-[#9b9a9f] mx-[2px]" />
            <Tool name="inspect" />
          </div>
        </div>
        <div className="relative h-[17px] mb-px flex font-['Noto_Sans'] text-[11px] leading-4">
          <svg viewBox="0 0 122 17" className="absolute inset-0 w-[122px] h-[17px]">
            <path d="M1 0l6 16h21l5-16z" fill="#fff" />
            <path d="M1 0l6 16h21l6-16H122M31 8l3 8h30l6-16M67 8l3 8h52" fill="none" stroke="#000" />
          </svg>
          <button className="relative w-[33px] font-bold">All</button>
          <button className="relative w-[33px]">PCB</button>
          <button className="relative pl-[11px]">Electrical</button>
        </div>
      </div>
    </aside>
  );
}

export default function App() {
  return (
    <div className="h-screen w-full overflow-hidden flex flex-col bg-[#e0dfe4] text-black font-['Liberation_Sans',sans-serif]">
      <TitleBar />
      <MenuBar />
      <Toolbars />
      <div className="flex-1 min-h-0 flex border-t border-b border-[#9b9a9f]">
        <Navigator />
        <div className="w-[10px] shrink-0 border-r-2 border-[#222]" />
        <Workspace />
        <div className="w-1 shrink-0" />
        <Attributes />
      </div>
    </div>
  );
}
